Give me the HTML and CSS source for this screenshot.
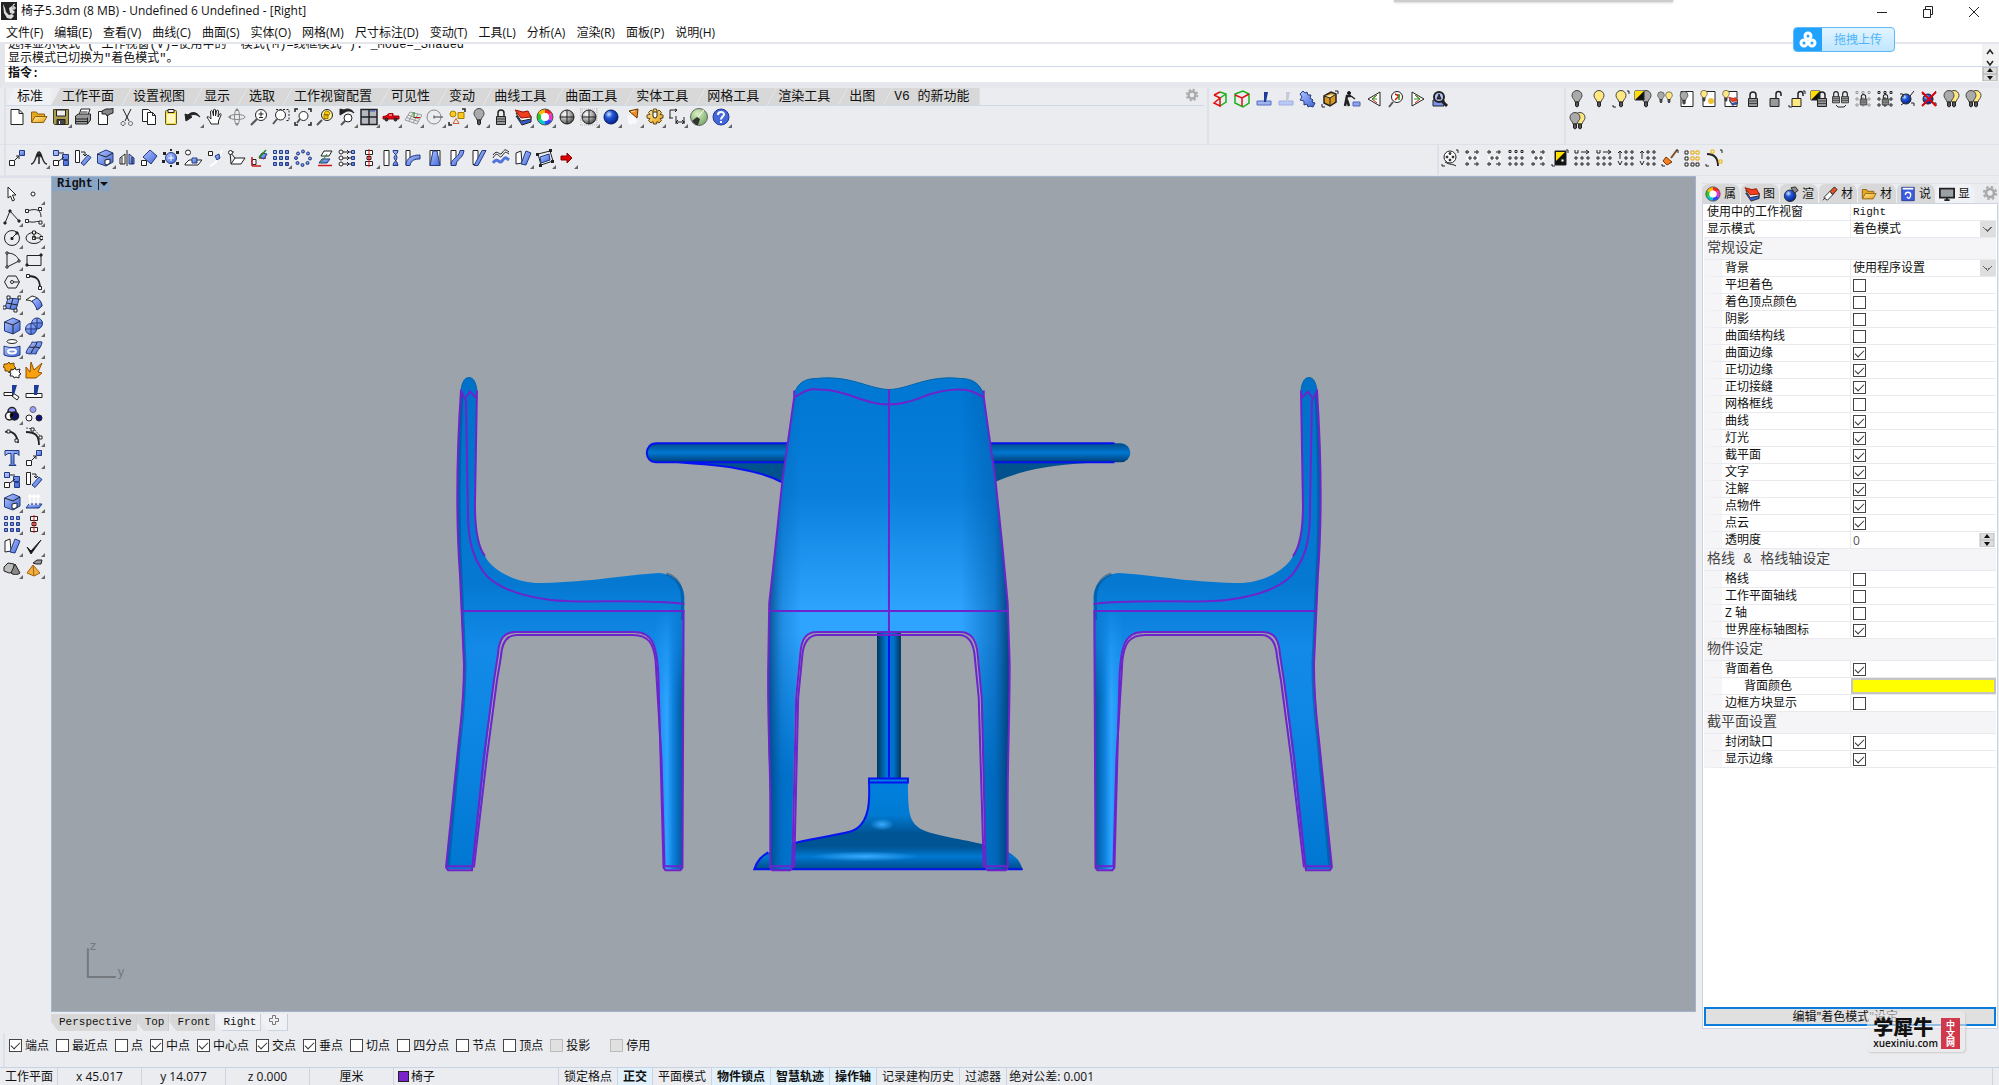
FILE: index.html
```html
<!DOCTYPE html>
<html lang="zh-CN">
<head>
<meta charset="utf-8">
<title>椅子5.3dm (8 MB) - Undefined 6 Undefined - [Right]</title>
<link rel="stylesheet" href="styles.css">
</head>
<body>
<svg class="sprite" aria-hidden="true">
<defs>
<linearGradient id="gb" x1="0" y1="0" x2="1" y2="1"><stop offset="0" stop-color="#b4c6ff"/><stop offset="1" stop-color="#3f66d8"/></linearGradient>
<radialGradient id="ggr" cx=".35" cy=".3" r=".8"><stop offset="0" stop-color="#fff"/><stop offset=".5" stop-color="#aaa"/><stop offset="1" stop-color="#333"/></radialGradient>
<radialGradient id="gbl" cx=".35" cy=".3" r=".8"><stop offset="0" stop-color="#cfe2ff"/><stop offset=".35" stop-color="#1f56d8"/><stop offset="1" stop-color="#001a78"/></radialGradient>
<radialGradient id="ggn" cx=".4" cy=".3" r=".8"><stop offset="0" stop-color="#d8f0c0"/><stop offset="1" stop-color="#6fa060"/></radialGradient>
<linearGradient id="gy" x1="0" y1="0" x2="1" y2="1"><stop offset="0" stop-color="#ffef9c"/><stop offset="1" stop-color="#e89a10"/></linearGradient>
</defs>
<symbol id="new" viewBox="0 0 18 18"><path class="w" d="M3 1.500h8l4 4v11H3zM11 1.500v4h4"/></symbol>
<symbol id="open" viewBox="0 0 18 18"><path fill="#e8a820" stroke="#8a6010" d="M1.500 14V4h5l1 2h7v3"/><path fill="url(#gy)" stroke="#8a6010" d="M1.500 14.500L5 8.500h12l-3.500 6z"/></symbol>
<symbol id="save" viewBox="0 0 18 18"><path fill="#a89a50" stroke="#444020" d="M1.500 1.500h15v15h-14l-1-1z"/><path fill="#eee" d="M4.500 2h9v6h-9z"/><path fill="#444" d="M5 11.500h8v5H5z"/><path stroke="#fff" d="M7.500 13v3"/></symbol>
<symbol id="print" viewBox="0 0 18 18"><path class="w" d="M5 7l2-6h9l-2 6M6.500 4h7"/><path fill="#999" d="M1.500 8l3-2h12v6l-3 4h-12z"/><path class="w" d="M2 11h11M2 13.500h11M13.500 16V9.500"/></symbol>
<symbol id="prop" viewBox="0 0 18 18"><path class="w" d="M2.500 3.500h9v13h-9z"/><path fill="#888" d="M6 3l4-2h5l2-1v5l-3 1-3 2-1-2-4 0z"/></symbol>
<symbol id="cut" viewBox="0 0 18 18"><path d="M5 1l6 12M13 1L7 13"/><path stroke="#555" d="M5 13.500a2 2 0 1 0 .1 0M12.500 13.500a2 2 0 1 0 .1 0"/></symbol>
<symbol id="copy" viewBox="0 0 18 18"><path class="w" d="M2.500 1.500h6l3 3v9h-9z"/><path class="w" d="M7.500 4.500h5l3 3v9h-8zM12.500 4.500v3h3"/></symbol>
<symbol id="paste" viewBox="0 0 18 18"><rect x="3.500" y="2.500" width="11" height="14" rx="1" fill="#f5dc50" stroke="#665510"/><path fill="#eee" d="M6 1.500h6v3H6z"/><path fill="#fff7c0" stroke="none" d="M5 6h8v9H5z"/></symbol>
<symbol id="undo" viewBox="0 0 18 18"><path fill="#222" d="M1 6l1 7 6-4-2-1c4-3 7-1 10 1C13 4 8 3 4 7z"/></symbol>
<symbol id="pan" viewBox="0 0 18 18"><path class="w" d="M5 16c-1-3-4-6-4-7 1-1 2 0 4 2L4.500 3.500c0-1 2-1 2 0L7.500 8V2c0-1 2-1 2 0v6l1-5c0-1 2-1 2 0l-.5 6 1.500-3c1-1 2 0 1.500 1l-2.500 6v3z"/></symbol>
<symbol id="rotv" viewBox="0 0 18 18"><g stroke="#888"><ellipse cx="9" cy="9" rx="8" ry="2.500"/><ellipse cx="9" cy="9" rx="2.500" ry="8"/></g><path fill="#888" stroke="none" d="M9 0l2 3H7zM9 18l2-3H7zM0 9l3-2v4z"/></symbol>
<symbol id="zdyn" viewBox="0 0 18 18"><path stroke-width="2" stroke="#555" d="M7 11l-6 6"/><circle class="w" cx="11" cy="7" r="5.500"/><path d="M8.500 6h5M11 3.500v5M9 9.500h4"/></symbol>
<symbol id="zwin" viewBox="0 0 18 18"><path stroke-width="2" stroke="#555" d="M5 11l-4 5"/><circle class="w" cx="8.500" cy="7" r="5"/><path stroke-dasharray="2 1.500" d="M4 1.500h13v11h-4"/></symbol>
<symbol id="zext" viewBox="0 0 18 18"><path stroke-width="2" stroke="#555" d="M6 11l-3 4"/><circle class="w" cx="9.500" cy="8" r="4.500"/><path stroke-width="1.500" d="M1 4V1h3M14 1h3v3M17 14v3h-3M1 14v3h3"/></symbol>
<symbol id="zsel" viewBox="0 0 18 18"><path stroke-width="2" stroke="#555" d="M6 12l-5 5"/><circle cx="11" cy="7" r="5.500" fill="#fff6a0"/><path fill="#ffc800" stroke="#997000" d="M11 3a2.500 2.500 0 1 0 .1 0zM8 6.500h4v4H8z"/></symbol>
<symbol id="zund" viewBox="0 0 18 18"><path fill="#222" d="M2 1v6l5-3c4-2 6-1 9 1-2-4-7-5-10-3z"/><path stroke-width="2" stroke="#555" d="M7 13l-4 4"/><circle class="w" cx="10" cy="10" r="4"/></symbol>
<symbol id="four" viewBox="0 0 18 18"><path fill="#b4b8c0" stroke-width="1.500" d="M1 1.500h16v15H1zM9 1.500v15M1 9h16"/><path stroke="#3355cc" d="M10 3h5"/></symbol>
<symbol id="car" viewBox="0 0 18 18"><path fill="#e00010" stroke="#a00008" d="M1 11V8.500l3-.5 3-2.500h4V8h6v3z"/><path stroke="#eee" d="M7 7h3"/><circle cx="4.500" cy="11.500" r="1.500" fill="#333"/><circle cx="13.500" cy="11.500" r="1.500" fill="#333"/></symbol>
<symbol id="cpl" viewBox="0 0 18 18"><path stroke="#999" d="M1 12l5-8 12 3-5 9zM4 7l11 4M9 5l-4 8M14 6l-5 9M2.500 9.500l12 4"/><path stroke="#c00" d="M10 9.500h6"/><path stroke="#080" d="M10 10V4"/></symbol>
<symbol id="osn" viewBox="0 0 18 18"><circle cx="8" cy="9" r="7" stroke="#888"/><path stroke="#444" d="M8 9h9M8 7.500v3"/></symbol>
<symbol id="sel" viewBox="0 0 18 18"><circle cx="5" cy="6" r="3" fill="#ffc820" stroke="#a08000"/><path fill="#ffc820" stroke="#a08000" d="M10 4.500h6v6h-6z"/><path stroke="#d06030" d="M8 10.500l-3 5h6z"/><path d="M14 1h3v3M1 14v3h3" stroke-width="1.500"/></symbol>
<symbol id="bulb" viewBox="0 0 18 18"><path class="bf" d="M7 12C6.500 9 4 8.500 4 5.500a5 5 0 0 1 10 0C14 8.500 11.500 9 11 12z"/><path fill="#555" d="M7.500 12h3v4l-1.500 1-1.500-1z"/></symbol>
<symbol id="lock" viewBox="0 0 18 18"><path stroke-width="1.500" d="M6 9V5a3 3 0 0 1 6 0v4"/><path class="lf" d="M4.500 8.500h9v8h-9z"/><path stroke="#444" d="M5 11h8M5 13.500h8"/></symbol>
<symbol id="unlock" viewBox="0 0 18 18"><path stroke-width="1.500" d="M10 9V4a2.500 2.500 0 0 1 5 0v2"/><path class="lf" d="M4 8.500h9v8H4z"/></symbol>
<symbol id="layers" viewBox="0 0 18 18"><path fill="#335bd0" d="M2 8l6 9 9-3V9z"/><path class="w" d="M2 5l5 8 10-2V8z"/><path fill="#f04020" stroke="#901000" d="M1 2l6 8 10-1-3-6-5 1z"/></symbol>
<symbol id="wheel" viewBox="0 0 18 18"><g stroke-width="4"><path stroke="#f22" d="M9 3a6 6 0 0 1 5.200 3"/><path stroke="#e3c" d="M14.200 6a6 6 0 0 1 0 6"/><path stroke="#34f" d="M14.200 12A6 6 0 0 1 9 15"/><path stroke="#0cc" d="M9 15a6 6 0 0 1-5.200-3"/><path stroke="#2c2" d="M3.800 12a6 6 0 0 1 0-6"/><path stroke="#fb0" d="M3.800 6A6 6 0 0 1 9 3"/></g><circle cx="9" cy="9" r="8" stroke="#555"/><circle cx="9" cy="9" r="4" fill="#fff" stroke="none"/></symbol>
<symbol id="sph" viewBox="0 0 18 18"><circle cx="9" cy="9" r="7" fill="url(#ggr)"/><path d="M2 9h14M9 2v14"/></symbol>
<symbol id="sphg" viewBox="0 0 18 18"><path stroke="#bbb" stroke-dasharray="1 1" d="M0 1h18M0 4h18M0 8h18M0 12h18M0 17h18M1 0v18M17 0v18"/><circle cx="9" cy="9" r="7" fill="url(#ggr)"/><path d="M2 9h14M9 2v14"/></symbol>
<symbol id="sphb" viewBox="0 0 18 18"><circle cx="9" cy="9" r="7" fill="url(#gbl)" stroke="#001a60"/></symbol>
<symbol id="cone" viewBox="0 0 18 18"><path fill="#fff" stroke="none" opacity=".7" d="M3 8l8-3 2 10-8 2z"/><path fill="#f09020" stroke="#663000" d="M5 3l9-2-1 9z"/><path stroke="#ffe0a0" d="M7 4l4-1"/></symbol>
<symbol id="gear" viewBox="0 0 18 18"><path fill="url(#gy)" stroke="#5a4410" d="M7.500 1h3l.5 2.500 2-1.500 2.500 2.500-1.500 2 3 .5v3l-3 .5 1.500 2-2.500 2.500-2-1.500-.5 2.500h-3L7 13.500 5 15l-2.500-2.500 1.500-2-3-.5V7l3-.5-1.500-2L5 2l2 1.500z"/><path class="w" d="M7 4h4v4a2 2 0 0 1-4 0z"/></symbol>
<symbol id="dims" viewBox="0 0 18 18"><path d="M2 2h7M2 2v8M1 10h4M8 8v8M8 14h9M16 9v7M7 1l2 1-2 2M10 12l-2 2 2 2M14 12l2 2-2 2"/></symbol>
<symbol id="globe" viewBox="0 0 18 18"><circle cx="9" cy="9" r="8.500" fill="url(#ggn)" stroke="#666"/><path fill="#333" stroke="none" d="M2 13l5-4 3 2-2 6H6z"/><path stroke="#fff" d="M8 9l6-7"/></symbol>
<symbol id="help" viewBox="0 0 18 18"><circle cx="9" cy="9" r="8" fill="#4468d8" stroke="#223a90"/><path stroke="#fff" stroke-width="2" d="M6 7c0-4 6-4 6-.5 0 2-3 2-3 5M9 13v2"/></symbol>
<symbol id="move" viewBox="0 0 18 18"><path class="w" d="M1.500 11.500h5v5h-5z"/><path class="b" d="M11.500 1.500h5v5h-5z"/><path d="M7 11l4-4M8 7h3v3"/></symbol>
<symbol id="acur" viewBox="0 0 18 18"><path stroke-width="1.500" d="M1 15c5 0 5-12 8-12s3 12 8 12M9 15V5M6.500 8L9 5l2.500 3"/></symbol>
<symbol id="dup" viewBox="0 0 18 18"><path class="b" d="M1.500 1.500h5v5h-5zM11.500 11.500h5v5h-5zM10.500 5.500h6v5h-6z"/><path class="w" d="M1.500 11.500h5v5h-5z"/><path d="M7 4h5M7 12l5-4"/></symbol>
<symbol id="rot" viewBox="0 0 18 18"><path class="w" d="M1.500 1.500h4v12h-4z"/><path class="b" d="M7 14l7-8 3 2.500-7 8z"/><path d="M7 3h4v3M9 5l2 2 2-2"/></symbol>
<symbol id="box" viewBox="0 0 18 18"><path class="b" d="M1.500 5L10 1l7 3v9l-7 4-8.500-3z"/><path d="M1.500 5L10 8l7-4M10 8v9"/></symbol>
<symbol id="boxc" viewBox="0 0 18 18"><path class="b" d="M1.500 5L10 1l7 3v9l-7 4-8.500-3z"/><path d="M1.500 5L10 8l7-4"/><path class="w" d="M9 11l5-1v4l-3 2-2-1z"/></symbol>
<symbol id="mir" viewBox="0 0 18 18"><path class="w" d="M2 15V9l5-4v10z"/><path class="b" d="M16 15V9l-5-4v10z"/><path d="M9 1v16M4 8v7M14 8v7"/></symbol>
<symbol id="dia" viewBox="0 0 18 18"><path class="b" d="M3 8l7-7 7 6-6 8z"/><path class="w" d="M1.500 11.500h5v5h-5z"/></symbol>
<symbol id="ori" viewBox="0 0 18 18"><circle class="b" cx="9" cy="9" r="5.500"/><path stroke="#fff" d="M6 9h6M9 6v6"/><path fill="#222" stroke="none" d="M1 3h3v3H1zM14 2h3v3h-3zM0 11h3v3H0zM14 13h3v3h-3zM8 0h2v2H8zM8 16h2v2H8z"/></symbol>
<symbol id="onsrf" viewBox="0 0 18 18"><path class="w" d="M1 15l4-4h13l-4 5H1z"/><path class="b" d="M8 9h5v5H8z"/><circle class="w" cx="4" cy="3.500" r="2.500"/></symbol>
<symbol id="flow" viewBox="0 0 18 18"><path stroke="#fff" stroke-width="2" d="M4 17c7-3 10-8 12-16"/><path class="w" d="M2.500 2.500h4v4h-4z"/><path class="b" d="M9 7l4-2 1 4-3 2z"/></symbol>
<symbol id="pers" viewBox="0 0 18 18"><path class="w" d="M3 15l4-6h10l-4 6z"/><path d="M3 15L2 3l5 6M2 3h4"/><circle class="w" cx="2.500" cy="3.500" r="2"/></symbol>
<symbol id="axis" viewBox="0 0 18 18"><path class="w" d="M2 10.500h4v5H2z"/><path stroke="#d01818" stroke-width="1.500" d="M2 17h9M2 17V8M9 9h7"/><path class="b" d="M9 8l3-4 5 1-3 5z"/><path stroke="#189018" stroke-width="1.500" d="M9 9l7-8"/></symbol>
<symbol id="g9" viewBox="0 0 18 18"><path class="b" d="M1.500 1.500h3v3h-3zM7.500 1.500h3v3h-3zM13.500 1.500h3v3h-3zM1.500 7.500h3v3h-3zM7.500 7.500h3v3h-3zM13.500 7.500h3v3h-3zM1.500 13.500h3v3h-3zM7.500 13.500h3v3h-3zM13.500 13.500h3v3h-3z"/></symbol>
<symbol id="pol" viewBox="0 0 18 18"><g class="b"><circle cx="9" cy="2.500" r="1.500"/><circle cx="14" cy="4.500" r="1.500"/><circle cx="16" cy="9.500" r="1.500"/><circle cx="13.500" cy="14" r="1.500"/><circle cx="8.500" cy="16" r="1.500"/><circle cx="3.500" cy="14" r="1.500"/><circle cx="2" cy="9" r="1.500"/><circle cx="4" cy="4.500" r="1.500"/></g></symbol>
<symbol id="psh" viewBox="0 0 18 18"><path class="w" d="M5 7l3-5h8l-3 5z"/><path class="b" d="M3 14l3-4h8l-3 4z"/><path stroke="#189018" d="M5 14l6-9"/><path stroke="#d01818" stroke-width="1.500" d="M2 16.500h14"/></symbol>
<symbol id="list" viewBox="0 0 18 18"><path d="M5 3h8M5 9h8M5 15h8M9 1l2 2-2 2M9 7l2 2-2 2M9 13l2 2-2 2"/><g class="w"><circle cx="3" cy="3" r="2"/><circle cx="3" cy="9" r="2"/><circle cx="3" cy="15" r="2"/></g><path class="b" d="M13.500 1.500h3v3h-3zM13.500 7.500h3v3h-3zM13.500 13.500h3v3h-3z"/></symbol>
<symbol id="alg" viewBox="0 0 18 18"><path class="w" d="M5.500 1.500h7v4h-7zM7 7.500h4v3H7zM5.500 12.500h7v4h-7z"/><path stroke="#e01010" d="M9 0v18M7 9h4"/></symbol>
<symbol id="tws" viewBox="0 0 18 18"><path class="w" d="M2 1.500h5v15H2z"/><path class="b" d="M11 1.500h5c0 4-4 4-4 7s4 4 4 8h-5c0-4 4-4 4-8s-4-3-4-7z"/></symbol>
<symbol id="bnd" viewBox="0 0 18 18"><path class="w" d="M2 16V1.500h4V13"/><path class="b" d="M2 16.500C2 9 8 6 16 6v4c-5 0-9 1-10 6.500z"/></symbol>
<symbol id="tap" viewBox="0 0 18 18"><path class="w" d="M4 1.500h10v15H4z"/><path class="b" d="M7 2h4l3 14.500H4z"/></symbol>
<symbol id="sh1" viewBox="0 0 18 18"><path class="w" d="M3 1.500h5v14H3z"/><path class="b" d="M3 16.500c0-8 8-7 9-15h4c-1 9-8 8-8 15z"/></symbol>
<symbol id="sh2" viewBox="0 0 18 18"><path class="w" d="M3 1.500h5v14H3z"/><path class="b" d="M4 16.500l8-15h4l-8 15z"/></symbol>
<symbol id="wav" viewBox="0 0 18 18"><path d="M1 9c5-9 6 2 9-2s3-5 7-2M1 6c5-7 6 2 9-2s3-4 7-1"/><path stroke="#5074d8" stroke-width="3" d="M1 14c5-7 6 2 9-2s3-4 7-1"/></symbol>
<symbol id="cg1" viewBox="0 0 18 18"><path class="w" d="M2 4l5-2 1 12-6 1z"/><path class="b" d="M7 15l5-13 5 2-5 12z"/></symbol>
<symbol id="cg2" viewBox="0 0 18 18"><path d="M2 5l12-3 3 10-12 4z"/><path class="b" d="M4 8l9-3 1 6-9 3z"/><path fill="#222" stroke="none" d="M0 4h3v3H0zM13 0h3v3h-3zM15 11h3v3h-3zM3 15h3v3H3z"/></symbol>
<symbol id="red" viewBox="0 0 18 18"><path fill="#e00000" stroke="#800" d="M3 7h6V4l5 5-5 5v-3H3z"/></symbol>
<symbol id="arr" viewBox="0 0 18 18"><path class="w" d="M5 2l8 8H9.500l2 5-2 1-2-5L5 13z"/></symbol>
<symbol id="pt" viewBox="0 0 18 18"><circle class="w" cx="8" cy="9" r="2"/></symbol>
<symbol id="pl" viewBox="0 0 18 18"><path d="M2 16L7 4l9 10"/><path fill="#222" d="M1 15h2v2H1zM6 3h2v2H6zM15 13h2v2h-2z"/></symbol>
<symbol id="crv" viewBox="0 0 18 18"><path d="M2 4c12-4 14 1 14 6M2 14c8 3 9-1 14 1"/><path class="w" d="M.500 2.500h3v3h-3zM13.500.500h3v3h-3zM.500 12.500h3v3h-3zM14 14h3v3h-3z"/></symbol>
<symbol id="cir" viewBox="0 0 18 18"><circle cx="9" cy="9" r="7.500"/><path fill="#222" d="M9 9l5-5M8 8.500h2v2H8zM13 3h2v2h-2z"/></symbol>
<symbol id="ell" viewBox="0 0 18 18"><ellipse cx="9" cy="9" rx="8" ry="5.500"/><path class="w" d="M7.500 7.500h3v3h-3zM15 7.500h3v3h-3zM7.500 2h3v3h-3z"/><path d="M9 5v4h6"/></symbol>
<symbol id="arc" viewBox="0 0 18 18"><path d="M4 16V2c6 0 11 3 12 8L4 16"/><path class="w" d="M3 1h2v2H3zM15 9h2v2h-2zM3 15h2v2H3z"/></symbol>
<symbol id="rec" viewBox="0 0 18 18"><path d="M2 4.500h14v10H2z"/><path fill="#222" d="M15 3h2v2h-2zM1 13h2v2H1z"/></symbol>
<symbol id="hex" viewBox="0 0 18 18"><path d="M1.500 9L5 3h8l3.500 6-3.500 6H5zM9 9h7"/><circle class="w" cx="9" cy="9" r="1.500"/></symbol>
<symbol id="fil" viewBox="0 0 18 18"><path stroke-width="1.800" d="M3 3c9 0 12 4 12 12"/><path class="w" d="M1.500 1.500h3v3h-3zM13.500 13.500h3v3h-3z"/></symbol>
<symbol id="srf" viewBox="0 0 18 18"><path class="b" d="M5 3l11 1-3 11-11-2z"/><path d="M3.500 8l11 2M10 3.500L7 14"/><path class="w" d="M4 1h3v3H4zM15 1h3v3h-3zM0 11h3v3H0zM11 14h3v3h-3z"/></symbol>
<symbol id="srf2" viewBox="0 0 18 18"><path class="w" d="M1 5l6-4c6 1 9 5 10 10l-5 4c0-6-5-10-11-10z"/><path class="b" d="M7 6l5-3c3 2 5 5 5 8l-5 4c-1-4-3-6-5-9z"/></symbol>
<symbol id="sph2" viewBox="0 0 18 18"><circle class="b" cx="12" cy="6.500" r="5.500"/><path stroke="#223a80" d="M12 1v11M7 6h11"/><circle class="b" cx="6" cy="12" r="5.500"/><path stroke="#223a80" d="M6 6v11M1 12h11"/></symbol>
<symbol id="cyl" viewBox="0 0 18 18"><ellipse class="w" cx="9" cy="2.500" rx="5" ry="2"/><path class="b" d="M1 7c5 2 11 2 16 0v9c-5 2-11 2-16 0z"/><ellipse cx="9" cy="12.500" rx="4" ry="2" stroke="#fff" stroke-width="2"/></symbol>
<symbol id="msh" viewBox="0 0 18 18"><path class="b" d="M1 14c2-7 5-7 6-11 4 1 6-1 10 0-1 7-4 6-6 12-4-1-6 1-10-1z"/><path d="M4 8c4 1 7-1 11 1M12 3c-1 5-4 6-6 11"/></symbol>
<symbol id="puz" viewBox="0 0 18 18"><path fill="#f0a010" stroke="#704800" d="M1 3l3 0 2-2 1 2 4-1v3l2 2-2 1 0 3-3-1-2 2-1-2-3 0 0-3-2-1 1-1z"/><path class="w" d="M8 8l2 1 2-2 1 2 4-1-1 3 2 2-2 1 0 3-3-1-2 1-1-2-3 0 1-3-2-1 2-1z"/></symbol>
<symbol id="exp" viewBox="0 0 18 18"><path fill="#f8a010" stroke="#905000" d="M1 17L1 6l4 5 1-10 3 8 8-7-4 9 4 1-6 5z"/></symbol>
<symbol id="trm" viewBox="0 0 18 18"><path class="w" d="M1 9.500h9v3H1zM10 10l6 4-2 3-5-4z"/><path fill="#1c3c98" stroke="none" d="M9 2h5l-3 10-2-2z"/></symbol>
<symbol id="spl" viewBox="0 0 18 18"><path class="w" d="M1 10.500h16v4H1z"/><path fill="#1c3c98" stroke="none" d="M9 2h5l-2 10H9z"/></symbol>
<symbol id="ven" viewBox="0 0 18 18"><circle cx="9" cy="6.500" r="4" fill="#98a0ff" stroke-width="1.500"/><circle cx="6.500" cy="11" r="4" fill="#fff" stroke-width="1.500"/><circle cx="11.500" cy="11" r="4" fill="#101070" stroke-width="1.500"/><path fill="#000" d="M9 7l2 3-2 3-2-3z"/></symbol>
<symbol id="cc3" viewBox="0 0 18 18"><circle cx="8" cy="4.500" r="3" fill="#98a0ff" stroke="#666"/><circle cx="4" cy="13" r="3" fill="#fff"/><circle cx="14" cy="13" r="3" fill="#101080"/></symbol>
<symbol id="apt" viewBox="0 0 18 18"><path stroke-width="1.800" d="M2 5c8-2 12 3 13 11"/><path class="w" d="M4 3h3v3H4zM12 12h3v3h-3z"/></symbol>
<symbol id="cpt" viewBox="0 0 18 18"><path stroke-width="1.800" d="M1 5c9 0 13 3 13 13"/><path stroke="#555" stroke-dasharray="2 1" d="M1 1l8 1 8 9"/><path class="w" d="M6 1h3v3H6zM14 9h3v3h-3z"/></symbol>
<symbol id="txt" viewBox="0 0 18 18"><path class="b" d="M2 1.500h14v5l-2-2h-3v10l2 2H6l2-2V4.500H5l-3 2z"/></symbol>
<symbol id="prj" viewBox="0 0 18 18"><path class="b" d="M1 15l3-4h13l-3 4z"/><path stroke="#fff" stroke-width="1.500" d="M5 12V2M9 12V2M13 12V2M3 4l2-2 2 2M7 4l2-2 2 2M11 4l2-2 2 2"/></symbol>
<symbol id="chk" viewBox="0 0 18 18"><path fill="#111" d="M2 10l4 4L16 3 6 17z"/></symbol>
<symbol id="sol" viewBox="0 0 18 18"><path fill="#bbb" d="M1 8l4-4 6 1v8l-5 1-5-2z"/><path fill="#888" d="M8 14l4-9 5 9c-2 2-7 2-9 0z"/></symbol>
<symbol id="pyr" viewBox="0 0 18 18"><path fill="#f0b040" stroke="#a06010" d="M2 14l6-8 7 8-6 3z"/><path stroke="#a06010" d="M8 6l1 11"/><path fill="#999" d="M8 4l4-3h5l-1 4-5 0z"/></symbol>
<symbol id="rg1" viewBox="0 0 18 18"><path stroke="#18b018" stroke-width="1.500" d="M9 2l6 2v8l-6 4M9 8l6-4"/><path stroke="#e01010" stroke-width="1.500" d="M3 5l6-3M3 5l6 3-6 5 6 3V8"/></symbol>
<symbol id="rg2" viewBox="0 0 18 18"><path stroke="#18b018" stroke-width="1.500" d="M2 4l8-3 6 3v9l-6 4-8-4z"/><path stroke="#e01010" stroke-width="1.500" d="M2 5l7 3 7-4M9 8v8"/></symbol>
<symbol id="bl1" viewBox="0 0 18 18"><path fill="#a0b4f0" stroke="#5070c0" d="M2 11h14v4H2z"/><path fill="#1c3c98" stroke="none" d="M9 2h4l-2 10H9z"/></symbol>
<symbol id="bl2" viewBox="0 0 18 18"><path fill="#b8c8f8" stroke="#a0b0e0" d="M2 11h14v4H2z"/><path fill="#c8cad8" stroke="none" d="M9 2h4l-2 10H9z"/></symbol>
<symbol id="gr2" viewBox="0 0 18 18"><path class="b" d="M4 1l2 2 2-1 1 3 3 0-1 3 3 2-1 2 3 1-2 4-3-1-2 1-1-3-3 1 0-4-4-1 2-3-2-3z"/></symbol>
<symbol id="gold" viewBox="0 0 18 18"><path fill="#d89820" stroke-width="1.500" d="M3 6l7-4 5 2v8l-6 4-6-3z"/><path fill="#ffe8a0" d="M3 6l6 2 6-4M9 8v8"/><path d="M14 1h3v3M1 14v3h3"/></symbol>
<symbol id="man" viewBox="0 0 18 18"><circle cx="6" cy="3" r="1.500" fill="#111"/><path stroke-width="2.500" d="M8 6H4L3 11l-1 5M4 10l2 6"/><path stroke-width="1.500" d="M8 6l4 3"/><path fill="#8ca4f0" stroke="#5068b0" d="M10 12h7v4h-7z"/></symbol>
<symbol id="trl" viewBox="0 0 18 18"><path class="w" d="M15 2v14L3 9z"/><path stroke="#e01010" d="M12 5L7 9l5 4"/><path stroke="#18a018" d="M12 9H7l5-4"/></symbol>
<symbol id="trr" viewBox="0 0 18 18"><path class="w" d="M3 2v14l12-7z"/><path stroke="#e01010" d="M6 5l5 4-5 4"/><path stroke="#18a018" d="M5 9h6L6 5"/></symbol>
<symbol id="mgr" viewBox="0 0 18 18"><path stroke-width="2" stroke="#555" d="M6 12l-4 5"/><circle class="w" cx="10" cy="7" r="5.500"/><path stroke="#e01010" stroke-width="1.500" d="M8 4l4 2-4 4"/><path stroke="#18a018" stroke-width="1.500" d="M12 4v6"/></symbol>
<symbol id="mgb" viewBox="0 0 18 18"><path fill="#7c94f0" d="M2 10h11v6H2z"/><path stroke-width="3" d="M11 11l5 5"/><circle cx="8" cy="7" r="5" fill="#b8c4f8" stroke-width="2"/><path fill="#333" d="M6 9l2-5 2 5z"/></symbol>
<symbol id="half" viewBox="0 0 18 18"><path fill="#111" d="M1 1h9v9H1z"/><path fill="#ffe000" stroke="none" d="M1 10V1h9z"/></symbol>
<symbol id="brk" viewBox="0 0 18 18"><path d="M15 1h2v3M1 15v2h3"/></symbol>
<symbol id="page" viewBox="0 0 18 18"><path class="w" d="M3 1.500h12v15H3z"/></symbol>
<symbol id="dots" viewBox="0 0 18 18"><path class="w" d="M2 1.500h2v2H2zM8 1.500h2v2H8zM14 1.500h2v2h-2zM2 8h2v2H2zM8 8h2v2H8zM14 8h2v2h-2zM2 14h2v2H2zM8 14h2v2H8zM14 14h2v2h-2z"/></symbol>
<symbol id="dotx" viewBox="0 0 18 18"><path class="w" d="M3 2h2v2H3zM13 2h2v2h-2zM3 14h2v2H3zM13 14h2v2h-2z"/><path stroke="#fff" stroke-width="3" d="M3 9h13"/><path class="w" d="M6 8h2v2H6zM11 8h2v2h-2z"/><path stroke-dasharray="1 1" d="M5 3h2M11 3h2M5 15h2M11 15h2"/></symbol>
<symbol id="uar" viewBox="0 0 18 18"><path d="M2 1v3h3V1M8 3h8M13 1l3 2-3 2"/><path class="w" d="M2 8h2v2H2zM8 8h2v2H8zM14 8h2v2h-2zM2 14h2v2H2zM8 14h2v2H8zM14 14h2v2h-2z"/></symbol>
<symbol id="var" viewBox="0 0 18 18"><path d="M3 10V2M1 4l2-2 2 2M1 12l2 4 2-4"/><path class="w" d="M8 2h2v2H8zM14 2h2v2h-2zM8 8h2v2H8zM14 8h2v2h-2zM8 14h2v2H8zM14 14h2v2h-2z"/></symbol>
<symbol id="reel" viewBox="0 0 18 18"><circle class="w" cx="9" cy="8" r="6"/><circle cx="9" cy="4.500" r="1" fill="#444"/><circle cx="6" cy="8" r="1" fill="#444"/><circle cx="12" cy="8" r="1" fill="#444"/><circle cx="9" cy="11" r="1" fill="#444"/><path d="M4 13c4 3 9 2 11 4"/></symbol>
<symbol id="yb" viewBox="0 0 18 18"><path fill="#111" d="M4 2h11v14H4z"/><path fill="#ffe000" stroke="none" d="M5 12V3h9z"/><path class="w" d="M10 10h3v3h-3z"/></symbol>
<symbol id="brm" viewBox="0 0 18 18"><path stroke="#805020" stroke-width="2" d="M16 1l-6 8"/><path fill="#f08020" stroke="#803000" d="M5 8l6 5-5 3-4-4z"/></symbol>
<symbol id="ydt" viewBox="0 0 18 18"><path class="w" d="M2 2h3v3H2zM2 8h3v3H2zM2 14h3v3H2zM8 14h3v3H8zM13 14h3v3h-3z"/><path fill="#fff" stroke="#e0a000" d="M8 2h3v3H8zM13 2h3v3h-3zM8 8h3v3H8zM13 8h3v3h-3z"/></symbol>
<symbol id="yar" viewBox="0 0 18 18"><path stroke-width="1.800" d="M2 5c8 0 11 4 11 12"/><path stroke="#f0b000" d="M6 1h3v3H6zM14 11h3v3h-3z"/></symbol>
<symbol id="orb" viewBox="0 0 18 18"><circle cx="8" cy="9" r="5" fill="url(#gbl)"/><path d="M2 4h3v3M3 15l3-2M12 6l4-5M13 13h3v3"/></symbol>
<symbol id="rx" viewBox="0 0 18 18"><path stroke="#e00010" stroke-width="2" d="M2 2l14 14M16 2L2 16"/></symbol>
<symbol id="note" viewBox="0 0 18 18"><path fill="#3c5ce0" stroke="#223890" d="M2 1.500h14v15H2z"/><path fill="#fff" stroke="none" d="M3 2h12v2H3z"/><path stroke="#fff" stroke-width="1.500" d="M6 10c0-4 6-4 6 0s-3 5-4 2"/></symbol>
<symbol id="mon" viewBox="0 0 18 18"><path fill="#9aa0a4" stroke-width="2" d="M1 3h16v10H1z"/><path stroke-width="2" d="M6 16h6M9 13v3"/></symbol>
<symbol id="pen" viewBox="0 0 18 18"><path fill="#e05020" d="M9 6l5-5 3 3-5 6z"/><path class="w" d="M2 13l7-7 3 4-6 6z"/><path d="M1 16l3-3"/></symbol>
<symbol id="bomb" viewBox="0 0 18 18"><circle cx="8" cy="11" r="6.500" fill="url(#gbl)"/><path fill="#888" d="M9 2l5-1 3 4-4 3z"/></symbol>
<symbol id="cog" viewBox="0 0 18 18"><circle cx="9" cy="9" r="7" stroke-width="2" stroke-dasharray="3 2.500" class="cg"/><circle cx="9" cy="9" r="4.500" stroke-width="3" class="cg"/></symbol>
</svg>

<header class="titlebar">
  <svg class="logo" viewBox="0 0 16 18"><path fill="#222" stroke="none" d="M0 0h16v18H0z"/><path fill="#ddd" stroke="none" d="M2 2l2 4 1 4 3 3 3-1 2 2-3 3-4-1-3-5zM8 6l3-2 1 4 2 2-2 2-3-1z"/><path stroke="#fff" d="M14 2l-2 1v4h2V5h-2"/></svg>
  <h1>椅子5.3dm (8 MB) - Undefined 6 Undefined - [Right]</h1>
  <div class="winbtns">
    <button aria-label="最小化"><svg viewBox="0 0 12 12"><path d="M1 6.500h10"/></svg></button>
    <button aria-label="还原"><svg viewBox="0 0 12 12"><path d="M1.500 3.500h7v8h-7zM3.500 3.500v-3h7v8h-2"/></svg></button>
    <button aria-label="关闭"><svg viewBox="0 0 12 12"><path d="M1 1l10 10M11 1L1 11"/></svg></button>
  </div>
  <div class="topshade"></div>
</header>
<nav class="menu">
  <a href="#">文件(F)</a><a href="#">编辑(E)</a><a href="#">查看(V)</a><a href="#">曲线(C)</a><a href="#">曲面(S)</a><a href="#">实体(O)</a><a href="#">网格(M)</a><a href="#">尺寸标注(D)</a><a href="#">变动(T)</a><a href="#">工具(L)</a><a href="#">分析(A)</a><a href="#">渲染(R)</a><a href="#">面板(P)</a><a href="#">说明(H)</a>
</nav>
<button class="upload"><span class="cloud"><svg viewBox="0 0 20 20"><g stroke="#fff" stroke-width="3"><circle cx="10" cy="6" r="3"/><circle cx="6" cy="13" r="3"/><circle cx="14" cy="13" r="3"/></g></svg></span><span class="uptext">拖拽上传</span></button>

<section class="command">
  <div class="history">
    <div class="lines"><p>选择显示模式 ( 工作视窗(V)=使用中的  模式(M)=线框模式 ): _Mode=_Shaded</p><p>显示模式已切换为"着色模式"。</p></div>
    <div class="scroll"><svg viewBox="0 0 16 24"><path stroke-width="1.500" d="M5 10l3-4 3 4M5 17l3 4 3-4"/></svg></div>
  </div>
  <div class="prompt">
    <label for="cmd">指令:</label><input id="cmd" type="text">
    <div class="scroll"><svg viewBox="0 0 16 14"><path fill="#ddd" stroke="#aaa" d="M1 0h14v14H1zM1 7h14"/><path fill="#111" stroke="none" d="M8 1l3 4H5zM8 13l3-4H5z"/></svg></div>
  </div>
</section>

<div class="bars">
  <div class="bar main">
    <div class="tabs">
      <button class="on">标准</button><button>工作平面</button><button>设置视图</button><button>显示</button><button>选取</button><button>工作视窗配置</button><button>可见性</button><button>变动</button><button>曲线工具</button><button>曲面工具</button><button>实体工具</button><button>网格工具</button><button>渲染工具</button><button>出图</button><button>V6 的新功能</button>
      <svg class="ico gearopt"><use href="#cog"/></svg>
    </div>
    <div class="icons">
      <button aria-label="新建"><svg class="ico"><use href="#new"/></svg></button><button aria-label="打开"><svg class="ico"><use href="#open"/></svg></button><button class="m" aria-label="保存"><svg class="ico"><use href="#save"/></svg></button><button aria-label="打印"><svg class="ico"><use href="#print"/></svg></button><button aria-label="属性"><svg class="ico"><use href="#prop"/></svg></button><button aria-label="剪切"><svg class="ico"><use href="#cut"/></svg></button><button aria-label="复制"><svg class="ico"><use href="#copy"/></svg></button><button aria-label="粘贴"><svg class="ico"><use href="#paste"/></svg></button><button class="m" aria-label="复原"><svg class="ico"><use href="#undo"/></svg></button><button aria-label="平移"><svg class="ico"><use href="#pan"/></svg></button><button aria-label="旋转视图"><svg class="ico"><use href="#rotv"/></svg></button><button aria-label="动态缩放"><svg class="ico"><use href="#zdyn"/></svg></button><button aria-label="框选缩放"><svg class="ico"><use href="#zwin"/></svg></button><button aria-label="缩放至最大"><svg class="ico"><use href="#zext"/></svg></button><button aria-label="缩放至选取"><svg class="ico"><use href="#zsel"/></svg></button><button class="m" aria-label="复原视图"><svg class="ico"><use href="#zund"/></svg></button><button class="m" aria-label="四视图"><svg class="ico"><use href="#four"/></svg></button><button class="m" aria-label="视图"><svg class="ico"><use href="#car"/></svg></button><button class="m" aria-label="工作平面"><svg class="ico"><use href="#cpl"/></svg></button><button class="m" aria-label="锁点"><svg class="ico"><use href="#osn"/></svg></button><button class="m" aria-label="选取"><svg class="ico"><use href="#sel"/></svg></button><button class="m" aria-label="隐藏"><svg class="ico"><use href="#bulb"/></svg></button><button class="m" aria-label="锁定"><svg class="ico"><use href="#lock"/></svg></button><button class="m" aria-label="图层"><svg class="ico"><use href="#layers"/></svg></button><button class="m" aria-label="颜色"><svg class="ico"><use href="#wheel"/></svg></button><button aria-label="着色"><svg class="ico"><use href="#sph"/></svg></button><button class="m" aria-label="网格着色"><svg class="ico"><use href="#sphg"/></svg></button><button class="m" aria-label="渲染"><svg class="ico"><use href="#sphb"/></svg></button><button class="m" aria-label="灯光"><svg class="ico"><use href="#cone"/></svg></button><button class="m" aria-label="选项"><svg class="ico"><use href="#gear"/></svg></button><button class="m" aria-label="尺寸"><svg class="ico"><use href="#dims"/></svg></button><button aria-label="Grasshopper"><svg class="ico"><use href="#globe"/></svg></button><button class="m" aria-label="帮助"><svg class="ico"><use href="#help"/></svg></button>
    </div>
  </div>
  <div class="bar icons side">
    <button aria-label="边缘"><svg class="ico"><use href="#rg1"/></svg></button><button aria-label="方块"><svg class="ico"><use href="#rg2"/></svg></button><button aria-label="切割"><svg class="ico"><use href="#bl1"/></svg></button><button aria-label="切割预览"><svg class="ico"><use href="#bl2"/></svg></button><button aria-label="组件"><svg class="ico"><use href="#gr2"/></svg></button><button aria-label="图块"><svg class="ico"><use href="#gold"/></svg></button><button aria-label="推移"><svg class="ico"><use href="#man"/></svg></button><button aria-label="上一个"><svg class="ico"><use href="#trl"/></svg></button><button aria-label="检视"><svg class="ico"><use href="#mgr"/></svg></button><button aria-label="下一个"><svg class="ico"><use href="#trr"/></svg></button><button aria-label="搜索"><svg class="ico"><use href="#mgb"/></svg></button>
  </div>
  <div class="bar icons side">
    <button aria-label="隐藏物件"><svg class="ico"><use href="#bulb"/></svg></button><button class="yel" aria-label="显示物件"><svg class="ico"><use href="#bulb"/></svg></button><button class="yel" aria-label="显示选取"><svg class="ico"><use href="#bulb"/><use href="#brk"/></svg></button><button aria-label="反选隐藏"><svg class="ico"><use href="#bulb" x="3"/><use href="#half"/></svg></button><button class="yel2" aria-label="对调隐藏"><svg class="ico"><use href="#bulb" x="7" y="0" width="12" height="15"/><use href="#bulb" x="-1" y="0" width="12" height="15"/></svg></button><button aria-label="图纸隐藏"><svg class="ico"><use href="#page"/><use href="#bulb" x="-1" y="1" width="14" height="14"/></svg></button><button class="yel" aria-label="图纸显示"><svg class="ico"><use href="#page"/><use href="#bulb" x="-2" y="0" width="12" height="12"/><circle cx="11" cy="11" r="3" fill="#f0c030" stroke="none"/></svg></button><button class="yel" aria-label="图纸图层"><svg class="ico"><use href="#page"/><use href="#layers" x="6" y="6" width="10" height="10"/><use href="#bulb" x="-2" y="0" width="12" height="12"/></svg></button><button aria-label="锁定物件"><svg class="ico"><use href="#lock"/></svg></button><button aria-label="解锁物件"><svg class="ico"><use href="#unlock"/></svg></button><button class="yel" aria-label="解锁选取"><svg class="ico"><use href="#unlock"/><use href="#brk"/></svg></button><button aria-label="反选锁定"><svg class="ico"><use href="#half"/><use href="#lock" x="3"/></svg></button><button aria-label="对调锁定"><svg class="ico"><use href="#lock" x="-3" y="0" width="14" height="14"/><use href="#lock" x="6" y="0" width="14" height="14"/><path d="M4 15l2 2h6l2-2"/></svg></button><button aria-label="锁定点"><svg class="ico dim"><use href="#dots"/><use href="#lock" x="3" y="3" width="13" height="13"/></svg></button><button aria-label="解锁点"><svg class="ico"><use href="#dots"/><use href="#lock" x="3" y="3" width="13" height="13"/></svg></button><button aria-label="隔离"><svg class="ico"><use href="#orb"/></svg></button><button aria-label="取消隔离"><svg class="ico"><use href="#orb"/><use href="#rx"/></svg></button><button class="yel2" aria-label="隐藏一"><svg class="ico"><use href="#bulb" x="3"/><use href="#bulb" x="-2"/></svg></button><button class="yel2" aria-label="隐藏二"><svg class="ico"><use href="#bulb" x="3"/><use href="#bulb" x="-2"/></svg></button><button class="yel2" aria-label="隐藏三"><svg class="ico"><use href="#bulb" x="3"/><use href="#bulb" x="-2"/></svg></button>
  </div>
</div>
<div class="bars second">
  <div class="bar icons">
    <button aria-label="移动"><svg class="ico"><use href="#move"/></svg></button><button class="m" aria-label="曲线"><svg class="ico"><use href="#acur"/></svg></button><button aria-label="复制物件"><svg class="ico"><use href="#dup"/></svg></button><button aria-label="旋转"><svg class="ico"><use href="#rot"/></svg></button><button class="m" aria-label="缩放"><svg class="ico"><use href="#boxc"/></svg></button><button aria-label="镜像"><svg class="ico"><use href="#mir"/></svg></button><button aria-label="定位"><svg class="ico"><use href="#dia"/></svg></button><button aria-label="曲面定位"><svg class="ico"><use href="#ori"/></svg></button><button aria-label="投影"><svg class="ico"><use href="#onsrf"/></svg></button><button aria-label="沿曲线"><svg class="ico"><use href="#flow"/></svg></button><button aria-label="垂直定位"><svg class="ico"><use href="#pers"/></svg></button><button aria-label="重新对应"><svg class="ico"><use href="#axis"/></svg></button><button class="m" aria-label="阵列"><svg class="ico"><use href="#g9"/></svg></button><button aria-label="环形阵列"><svg class="ico"><use href="#pol"/></svg></button><button aria-label="投影至平面"><svg class="ico"><use href="#psh"/></svg></button><button aria-label="设置点"><svg class="ico"><use href="#list"/></svg></button><button class="m" aria-label="对齐"><svg class="ico"><use href="#alg"/></svg></button><button aria-label="扭转"><svg class="ico"><use href="#tws"/></svg></button><button aria-label="弯曲"><svg class="ico"><use href="#bnd"/></svg></button><button aria-label="锥状化"><svg class="ico"><use href="#tap"/></svg></button><button aria-label="倾斜"><svg class="ico"><use href="#sh1"/></svg></button><button aria-label="直线倾斜"><svg class="ico"><use href="#sh2"/></svg></button><button aria-label="流动"><svg class="ico"><use href="#wav"/></svg></button><button class="m" aria-label="变形"><svg class="ico"><use href="#cg1"/></svg></button><button class="m" aria-label="变形控制器"><svg class="ico"><use href="#cg2"/></svg></button><button class="m" aria-label="推移"><svg class="ico"><use href="#red"/></svg></button>
  </div>
  <div class="bar icons">
    <button aria-label="点选"><svg class="ico"><use href="#reel"/><use href="#brk"/></svg></button><button aria-label="点一"><svg class="ico"><use href="#dotx"/></svg></button><button aria-label="点二"><svg class="ico"><use href="#dotx"/></svg></button><button aria-label="点三"><svg class="ico"><use href="#dots"/></svg></button><button aria-label="点四"><svg class="ico"><use href="#dotx"/></svg></button><button aria-label="反选点"><svg class="ico"><use href="#yb"/><use href="#brk"/></svg></button><button aria-label="U 方向"><svg class="ico"><use href="#uar"/></svg></button><button aria-label="U 方向二"><svg class="ico"><use href="#uar"/></svg></button><button aria-label="V 方向"><svg class="ico"><use href="#var"/></svg></button><button aria-label="V 方向二"><svg class="ico"><use href="#var"/></svg></button><button aria-label="笔刷"><svg class="ico"><use href="#brm"/><use href="#brk"/></svg></button><button aria-label="控制点"><svg class="ico"><use href="#ydt"/></svg></button><button aria-label="曲线点"><svg class="ico"><use href="#yar"/><use href="#brk"/></svg></button>
  </div>
</div>

<main class="work">
  <aside class="icons tools">
    <button aria-label="选取"><svg class="ico"><use href="#arr"/></svg></button><button class="m" aria-label="点"><svg class="ico"><use href="#pt"/></svg></button>
    <button class="m" aria-label="多重直线"><svg class="ico"><use href="#pl"/></svg></button><button class="m" aria-label="曲线"><svg class="ico"><use href="#crv"/></svg></button>
    <button class="m" aria-label="圆"><svg class="ico"><use href="#cir"/></svg></button><button class="m" aria-label="椭圆"><svg class="ico"><use href="#ell"/></svg></button>
    <button class="m" aria-label="圆弧"><svg class="ico"><use href="#arc"/></svg></button><button class="m" aria-label="矩形"><svg class="ico"><use href="#rec"/></svg></button>
    <button class="m" aria-label="多边形"><svg class="ico"><use href="#hex"/></svg></button><button class="m" aria-label="圆角"><svg class="ico"><use href="#fil"/></svg></button>
    <button class="m" aria-label="角点曲面"><svg class="ico"><use href="#srf"/></svg></button><button class="m" aria-label="曲面"><svg class="ico"><use href="#srf2"/></svg></button>
    <button class="m" aria-label="立方体"><svg class="ico"><use href="#box"/></svg></button><button class="m" aria-label="布尔"><svg class="ico"><use href="#sph2"/></svg></button>
    <button class="m" aria-label="圆柱"><svg class="ico"><use href="#cyl"/></svg></button><button class="m" aria-label="网格"><svg class="ico"><use href="#msh"/></svg></button>
    <button aria-label="组合"><svg class="ico"><use href="#puz"/></svg></button><button aria-label="炸开"><svg class="ico"><use href="#exp"/></svg></button>
    <button aria-label="修剪"><svg class="ico"><use href="#trm"/></svg></button><button aria-label="分割"><svg class="ico"><use href="#spl"/></svg></button>
    <button class="m" aria-label="群组"><svg class="ico"><use href="#ven"/></svg></button><button aria-label="解散群组"><svg class="ico"><use href="#cc3"/></svg></button>
    <button aria-label="编辑点"><svg class="ico"><use href="#apt"/></svg></button><button class="m" aria-label="控制点"><svg class="ico"><use href="#cpt"/></svg></button>
    <button aria-label="文字"><svg class="ico"><use href="#txt"/></svg></button><button class="m" aria-label="移动"><svg class="ico"><use href="#move"/></svg></button>
    <button aria-label="复制"><svg class="ico"><use href="#dup"/></svg></button><button aria-label="旋转"><svg class="ico"><use href="#rot"/></svg></button>
    <button class="m" aria-label="缩放"><svg class="ico"><use href="#boxc"/></svg></button><button class="m" aria-label="投影"><svg class="ico"><use href="#prj"/></svg></button>
    <button class="m" aria-label="阵列"><svg class="ico"><use href="#g9"/></svg></button><button class="m" aria-label="对齐"><svg class="ico"><use href="#alg"/></svg></button>
    <button class="m" aria-label="变形"><svg class="ico"><use href="#cg1"/></svg></button><button class="m" aria-label="检查"><svg class="ico"><use href="#chk"/></svg></button>
    <button class="m" aria-label="图块"><svg class="ico"><use href="#sol"/></svg></button><button class="m" aria-label="实体"><svg class="ico"><use href="#pyr"/></svg></button>
  </aside>

  <section class="center">
    <div class="viewport">
      <svg class="scene" viewBox="51 176 1645 836" preserveAspectRatio="xMidYMid meet">
        <defs>
          <linearGradient id="sideV" gradientUnits="userSpaceOnUse" x1="0" y1="377" x2="0" y2="870"><stop offset="0" stop-color="#0070c8"/><stop offset=".42" stop-color="#0579d2"/><stop offset=".55" stop-color="#138ae8"/><stop offset=".7" stop-color="#0e86e4"/><stop offset="1" stop-color="#0078d2"/></linearGradient>
          <linearGradient id="legF" gradientUnits="userSpaceOnUse" x1="652" y1="0" x2="684" y2="0"><stop offset="0" stop-color="#2fa4ff" stop-opacity="0"/><stop offset=".45" stop-color="#2fa4ff"/><stop offset=".65" stop-color="#0d80dc"/><stop offset="1" stop-color="#004f90"/></linearGradient>
          <linearGradient id="legFade" gradientUnits="userSpaceOnUse" x1="0" y1="600" x2="0" y2="700"><stop offset="0" stop-color="#000"/><stop offset="1" stop-color="#fff"/></linearGradient>
          <mask id="legMask" maskUnits="userSpaceOnUse" x="640" y="590" width="60" height="300"><path fill="url(#legFade)" stroke="none" d="M640 590h60v300h-60z"/></mask>
          <linearGradient id="backV" gradientUnits="userSpaceOnUse" x1="0" y1="400" x2="0" y2="870"><stop offset="0" stop-color="#0078d4"/><stop offset=".2" stop-color="#0a80dc"/><stop offset=".45" stop-color="#2fa4ff"/><stop offset=".5" stop-color="#2fa4ff"/><stop offset=".8" stop-color="#0078d4"/><stop offset="1" stop-color="#0078d4"/></linearGradient>
          <linearGradient id="backH" gradientUnits="userSpaceOnUse" x1="768" y1="0" x2="1009" y2="0"><stop offset="0" stop-color="#003a70" stop-opacity=".8"/><stop offset=".06" stop-color="#005aa8" stop-opacity=".3"/><stop offset=".14" stop-color="#005aa8" stop-opacity="0"/><stop offset=".8" stop-color="#005aa8" stop-opacity="0"/><stop offset=".94" stop-color="#0060b0" stop-opacity=".6"/><stop offset="1" stop-color="#003a70" stop-opacity=".9"/></linearGradient>
          <linearGradient id="slab" x1="0" y1="0" x2="0" y2="1"><stop offset="0" stop-color="#004c8c"/><stop offset=".5" stop-color="#0078d0"/><stop offset="1" stop-color="#003c74"/></linearGradient>
          <linearGradient id="col" x1="0" y1="0" x2="1" y2="0"><stop offset="0" stop-color="#00385e"/><stop offset=".4" stop-color="#0078d4"/><stop offset=".7" stop-color="#0070c8"/><stop offset="1" stop-color="#00345c"/></linearGradient>
          <linearGradient id="baseV" x1="0" y1="0" x2="0" y2="1"><stop offset="0" stop-color="#0082e0"/><stop offset=".4" stop-color="#007ad2"/><stop offset=".6" stop-color="#005494"/><stop offset=".75" stop-color="#005494"/><stop offset=".86" stop-color="#0078d0"/><stop offset="1" stop-color="#004c88"/></linearGradient>
          <radialGradient id="shine"><stop offset="0" stop-color="#38aaff"/><stop offset="1" stop-color="#38aaff" stop-opacity="0"/></radialGradient>
          <g id="chair">
            <path fill="url(#sideV)" stroke="none" d="M460 390C461 381 464 377 468 377S475 381 476 390L474 505C474 535 478 548 484 556C492 572 518 584 542 583C590 582 625 575 658 573C674 574 684 585 684 598L682 870H663L658 681C657 645 652 632 634 632H515C502 632 498 640 497 655L493 681L472 870H445L453 783L461 722C465 680 463 650 461 611L458 563C455 500 457 440 460 390z"/>
            <path fill="url(#legF)" stroke="none" mask="url(#legMask)" d="M652 600H683L682 870H663L658 681z"/>
            <path stroke="#004a88" stroke-width="3" opacity=".5" d="M461 392C458 450 457 520 460 575L464 664C464 700 461 722 459 740L447 868M666 574C676 577 682 586 682 598V620"/>
            <path stroke="#0064ac" d="M460 390C461 381 464 377 468 377S475 381 476 390"/>
            <g class="edge">
              <path d="M460 389C456 450 455 520 459 575L463 664C463 700 460 722 458 740L445 868 447 871H471L483 757 493 681 497 655C498 639 503 632 515 632H634C652 632 657 645 658 681L663 868 665 871H680L682 868 683 647V611"/>
              <path d="M473 868L486 757 496 681 500 657C501 642 507 635 516 635H632C649 635 653 645 655 660L661 760 664 867H682M446 867H472"/>
              <path d="M476 390L474 505C474 535 478 548 484 556M460 391L465 400 467 512C467 545 474 559 480 568C491 588 520 596 550 600S640 598 684 604M461 611H684M465 397L469 391 475 397"/>
            </g>
          </g>
          <path id="back" d="M794 394C797 383 804 378 816 378C850 374 870 389 889 389S928 374 961 378C973 378 980 383 984 394L996 482 1003 549 1008 603 1010 664C1010 715 1008 760 1008 800V870H986L982 698 979 655C978 640 973 632 961 632H816C804 632 800 640 799 655L795 698 791 870H770V800C768 760 768 715 768 664L769 603 775 549 782 482z"/>
        </defs>
        <path fill="#00528e" stroke="none" d="M677 462C720 464 755 468 782 482H995C1025 468 1057 464 1100 462z"/>
        <rect x="646" y="443" width="485" height="19" rx="9.500" fill="url(#slab)" stroke="none"/>
        <path class="blue" d="M1115 443H656C643 443 643 462 656 462H1115M677 462C720 465 755 468 782 482"/>
        <path fill="url(#col)" stroke="none" d="M877 630h24v152h-24z"/>
        <path class="blue" d="M889 632v146"/>
        <path fill="url(#baseV)" stroke="none" d="M870 783V779H908V783C908 815 910 822 920 829C932 836 965 840 984 845C1005 851 1017 852 1023 870H754C759 855 768 852 793 844C830 835 850 835 858 828C868 820 870 805 870 783z"/>
        <ellipse cx="865" cy="857" rx="55" ry="5" fill="url(#shine)" stroke="none"/>
        <ellipse cx="882" cy="825" rx="12" ry="6" fill="url(#shine)" stroke="none"/>
        <path class="blue" d="M869 783V779H908V783H869C870 805 868 820 858 828C850 835 830 835 793 844M768 853C761 857 757 861 754 870H1023"/>
        <use href="#back" fill="url(#backV)" stroke="none"/>
        <use href="#back" fill="url(#backH)" stroke="none"/>
        <path stroke="#0064ac" d="M794 394C797 383 804 378 816 378C850 374 870 389 889 389S928 374 961 378C973 378 980 383 984 394"/>
        <g class="edge">
          <path d="M794 397L782 482 775 549 769 603 768 664C767 715 770 760 770 800V868L772 871H790L792 868 796 698 800 655C801 639 806 632 817 632H960C971 632 977 639 978 655L982 698 986 868 988 871H1006L1008 868V800C1008 760 1010 715 1010 664L1008 603 1003 549 996 482 984 397"/>
          <path d="M794 868L798 698 802 657C803 643 808 635 818 635H959C969 635 974 643 975 657L979 698 984 868M770 867H793M985 867H1008"/>
          <path d="M794 397C804 391 808 388 818 389C848 389 862 404 889 404S928 389 959 389C970 389 974 391 984 397M889 389V634M769 611H1008M794 390V397M984 390V397"/>
        </g>
        <use href="#chair"/>
        <use href="#chair" transform="translate(1778 0) scale(-1 1)"/>
        <path stroke="#75797e" stroke-width="2" d="M86 949V978H114"/>
        <text class="ax" x="88" y="951">z</text><text class="ax" x="116" y="977">y</text>
      </svg>
      <button class="vname">Right <i></i></button>
    </div>
    <nav class="vtabs"><button>Perspective</button><button>Top</button><button>Front</button><button class="on">Right</button><button class="on plus" aria-label="新增"><svg viewBox="0 0 10 10"><path d="M3.500 3.500v-3h3v3h3v3h-3v3h-3v-3h-3v-3z" stroke="#777"/></svg></button></nav>
  </section>

  <aside class="panel">
    <nav class="ptabs"><button><svg class="ico"><use href="#wheel"/></svg>属</button><button><svg class="ico"><use href="#layers"/></svg>图</button><button><svg class="ico"><use href="#bomb"/></svg>渲</button><button><svg class="ico"><use href="#pen"/></svg>材</button><button><svg class="ico"><use href="#open"/></svg>材</button><button><svg class="ico"><use href="#note"/></svg>说</button><button class="on"><svg class="ico"><use href="#mon"/></svg>显</button><svg class="ico pgear"><use href="#cog"/></svg></nav>
    <div class="props">
      <div class="row top"><span>使用中的工作视窗</span><div class="mono">Right</div></div>
      <div class="row top"><label for="mode">显示模式</label><div><select id="mode"><option>着色模式</option></select></div></div>
      <h2>常规设定</h2>
      <div class="row"><label for="bg">背景</label><div><select id="bg"><option>使用程序设置</option></select></div></div>
      <div class="row"><label for="c1">平坦着色</label><div><input type="checkbox" id="c1"></div></div>
      <div class="row"><label for="c2">着色顶点颜色</label><div><input type="checkbox" id="c2"></div></div>
      <div class="row"><label for="c3">阴影</label><div><input type="checkbox" id="c3"></div></div>
      <div class="row"><label for="c4">曲面结构线</label><div><input type="checkbox" id="c4"></div></div>
      <div class="row"><label for="c5">曲面边缘</label><div><input type="checkbox" id="c5" checked></div></div>
      <div class="row"><label for="c6">正切边缘</label><div><input type="checkbox" id="c6" checked></div></div>
      <div class="row"><label for="c7">正切接缝</label><div><input type="checkbox" id="c7" checked></div></div>
      <div class="row"><label for="c8">网格框线</label><div><input type="checkbox" id="c8"></div></div>
      <div class="row"><label for="c9">曲线</label><div><input type="checkbox" id="c9" checked></div></div>
      <div class="row"><label for="c10">灯光</label><div><input type="checkbox" id="c10" checked></div></div>
      <div class="row"><label for="c11">截平面</label><div><input type="checkbox" id="c11" checked></div></div>
      <div class="row"><label for="c12">文字</label><div><input type="checkbox" id="c12" checked></div></div>
      <div class="row"><label for="c13">注解</label><div><input type="checkbox" id="c13" checked></div></div>
      <div class="row"><label for="c14">点物件</label><div><input type="checkbox" id="c14" checked></div></div>
      <div class="row"><label for="c15">点云</label><div><input type="checkbox" id="c15" checked></div></div>
      <div class="row"><label for="tr">透明度</label><div><input type="text" id="tr" class="num" value="0"><svg class="spin" viewBox="0 0 16 14"><path fill="#ddd" stroke="#bbb" d="M1 0h14v14H1zM1 7h14"/><path fill="#111" stroke="none" d="M8 1l3 4H5zM8 13l3-4H5z"/></svg></div></div>
      <h2>格线 &amp; 格线轴设定</h2>
      <div class="row"><label for="c16">格线</label><div><input type="checkbox" id="c16"></div></div>
      <div class="row"><label for="c17">工作平面轴线</label><div><input type="checkbox" id="c17"></div></div>
      <div class="row"><label for="c18">Z 轴</label><div><input type="checkbox" id="c18"></div></div>
      <div class="row"><label for="c19">世界座标轴图标</label><div><input type="checkbox" id="c19" checked></div></div>
      <h2>物件设定</h2>
      <div class="row"><label for="c20">背面着色</label><div><input type="checkbox" id="c20" checked></div></div>
      <div class="row sub"><label for="clr">背面颜色</label><div><input type="color" id="clr" value="#ffff00"></div></div>
      <div class="row"><label for="c21">边框方块显示</label><div><input type="checkbox" id="c21"></div></div>
      <h2>截平面设置</h2>
      <div class="row"><label for="c22">封闭缺口</label><div><input type="checkbox" id="c22" checked></div></div>
      <div class="row"><label for="c23">显示边缘</label><div><input type="checkbox" id="c23" checked></div></div>
      <button class="edit">编辑"着色模式"设定...</button>
    </div>
    <div class="mark"><div><b>学犀牛</b><span>xuexiniu.com</span></div><em>中文网</em></div>
  </aside>
</main>

<section class="osnap">
  <label><input type="checkbox" checked>端点</label><label><input type="checkbox">最近点</label><label><input type="checkbox">点</label><label><input type="checkbox" checked>中点</label><label><input type="checkbox" checked>中心点</label><label><input type="checkbox" checked>交点</label><label><input type="checkbox" checked>垂点</label><label><input type="checkbox">切点</label><label><input type="checkbox">四分点</label><label><input type="checkbox">节点</label><label><input type="checkbox">顶点</label><label class="wide"><input type="checkbox" disabled>投影</label><label><input type="checkbox" disabled>停用</label>
</section>
<footer class="status">
  <button class="s1">工作平面</button><span class="s2">x 45.017</span><span class="s2">y 14.077</span><span class="s2">z 0.000</span><span class="s2">厘米</span><button class="layer"><i></i>椅子</button><button>锁定格点</button><button class="act">正交</button><button>平面模式</button><button class="act">物件锁点</button><button class="act">智慧轨迹</button><button class="act">操作轴</button><button>记录建构历史</button><button>过滤器</button><span class="tol">绝对公差: 0.001</span>
</footer>
</body>
</html>
```

FILE: styles.css
```css
* { box-sizing: border-box; }

body {
  margin: 0;
  min-height: 100vh;
  display: flex;
  flex-direction: column;
  position: relative;
  background: #ebecf0;
  color: #111;
  font: 12px/17px "Open Sans", "Noto Sans CJK SC", sans-serif;
  overflow-x: hidden;
}

button, input, select { font: inherit; color: inherit; }
button { border: 0; background: none; padding: 0; margin: 0; white-space: nowrap; }
h1, h2, p { margin: 0; font-weight: 400; }
a { color: inherit; text-decoration: none; }
svg { fill: none; stroke: #222; flex: none; }
.sprite { position: absolute; width: 0; height: 0; }

/* icon fills */
.w { fill: #fff; }
.b { fill: url(#gb); stroke: #223a80; }
.bf { fill: var(--bulb, #aaa); stroke: #444; }
.lf { fill: var(--bulb, #999); }
.yel { --bulb: #ffe880; }
.yel2 use:first-child { --bulb: #ffe880; }
.cg { stroke: #a8a8a8; }
.ico { width: 18px; height: 18px; }
.dim use:first-child { opacity: .4; }

/* title and menu */
.titlebar {
  display: flex;
  align-items: center;
  height: 22px;
  padding-left: 1px;
  background: #fff;
}
.logo { width: 16px; height: 18px; }
h1 { margin-left: 4px; font-size: 12px; line-height: 22px; }
.winbtns { margin-left: auto; margin-right: 2px; display: flex; }
.winbtns button { width: 46px; height: 22px; }
.winbtns svg { width: 12px; height: 12px; vertical-align: middle; }
.topshade {
  position: absolute;
  top: 0;
  right: 326px;
  width: 279px;
  height: 2px;
  background: #ccc;
  box-shadow: 0 0 3px #aaa;
}
.menu {
  display: flex;
  gap: 11px;
  height: 20px;
  padding-left: 6px;
  background: #fff;
  line-height: 21px;
}
.upload {
  position: absolute;
  top: 27px;
  right: 104px;
  display: flex;
  width: 102px;
  height: 25px;
  border: 1px solid #5fb8f8;
  border-radius: 4px;
  overflow: hidden;
  background: linear-gradient(#e2f4ff, #bfe6ff);
  color: #4db4f8;
}
.cloud { width: 28px; background: #22a2ff; }
.cloud svg { width: 20px; height: 20px; margin-top: 2px; }
.uptext { flex: 1; line-height: 23px; }

/* command area */
.command {
  border-top: 2px solid #e4e6ec;
  border-left: 5px solid #e4e6ec;
  border-bottom: 6px solid #e6e8ee;
  background: #fff;
  font-family: "Liberation Mono", "Noto Sans CJK SC", monospace;
}
.history { display: flex; height: 23px; border-bottom: 1px solid #ccd8ea; }
.lines {
  flex: 1;
  display: flex;
  flex-direction: column;
  justify-content: flex-end;
  overflow: hidden;
  padding-left: 3px;
  line-height: 14px;
  white-space: pre;
}
.prompt { display: flex; height: 15px; padding-left: 3px; line-height: 14px; font-weight: 700; }
.prompt input { flex: 1; border: 0; padding: 0; outline: 0; }
.scroll { width: 17px; background: #f2f2f2; }
.scroll svg { width: 16px; display: block; }

/* tool bars */
.bars {
  display: grid;
  grid-template-columns: 1204fr 357fr 438fr;
  height: 57px;
  border-bottom: 1px solid #dfe1ea;
}
.bars.second { grid-template-columns: 1434fr 565fr; height: 31px; border-bottom-color: #e2e4ec; }
.bar { min-width: 0; margin-left: 3px; border-left: 2px solid #dfe1ea; }
.bar:first-child { margin-left: 4px; }
.icons { display: flex; flex-wrap: wrap; align-content: flex-start; }
.icons button { position: relative; width: 22px; height: 22px; line-height: 0; }
.icons .m::after {
  content: "";
  position: absolute;
  right: 0;
  bottom: 0;
  border: 2px solid transparent;
  border-right-color: #666;
  border-bottom-color: #666;
}
.second .icons { padding-top: 2px; }
.tabs { display: flex; height: 18px; border-bottom: 1px solid #ccd8e4; }
.tabs button {
  position: relative;
  padding: 0 8px 0 11px;
  font: 13px/17px "Liberation Mono", "Noto Sans CJK SC", monospace;
  background: #d8d8d8;
  clip-path: polygon(9px 0, calc(100% + 9px) 0, 100% 100%, 0 100%);
  box-shadow: 9px 0 #d8d8d8;
}
.tabs button + button::before {
  content: "";
  position: absolute;
  left: 4px;
  top: 0;
  bottom: 0;
  border-left: 1px solid #eef0f6;
  transform: skewX(-28deg);
}
.tabs .on { background: #eff1f5; box-shadow: none; }
.tabs button:nth-of-type(15) {
  box-shadow: none;
  padding-right: 10px;
  clip-path: polygon(9px 0, 100% 0, 100% 100%, 0 100%);
}
.gearopt { margin-left: auto; width: 14px; height: 14px; margin-right: 5px; }

/* working area */
.work { flex: 1; display: grid; grid-template-columns: 51px minmax(0, 1fr) 303px; }
.tools { padding: 5px 2px 0 1px; border-top: 2px solid #dfe1ea; }
.center { display: flex; flex-direction: column; }
.viewport {
  position: relative;
  flex: 1;
  min-height: 500px;
  background: #9da3ab;
  border: 1px solid #a4b4cc;
}
.scene { position: absolute; inset: 0; width: 100%; height: 100%; }
.edge path { stroke: #6d24cc; stroke-width: 2; fill: none; }
.blue { stroke: #0612f0; stroke-width: 2; fill: none; }
.ax { fill: #75797e; stroke: none; font: 13px "Liberation Sans", sans-serif; }
.vname {
  position: absolute;
  top: 0;
  left: 0;
  display: flex;
  align-items: center;
  gap: 5px;
  height: 14px;
  padding: 0 2px 0 5px;
  background: #8aa4c4;
  font: 700 12px/14px "Liberation Mono", monospace;
}
.vname i { border-left: 1px solid #222; height: 11px; display: flex; align-items: center; padding-left: 1px; }
.vname i::after { content: ""; border: 4px solid transparent; border-top-color: #111; border-bottom: 0; }

.vtabs { display: flex; height: 21px; padding-top: 2px; }
.vtabs button {
  height: 17px;
  padding: 0 4px 0 8px;
  font: 11px/17px "Liberation Mono", monospace;
  background: #d8d8d8;
  border-right: 1px solid #c6cede;
  clip-path: polygon(0 0, 100% 0, 100% 100%, 7px 100%, 0 8px);
}
.vtabs .on { background: #eff1f5; border-bottom: 1px solid #ccd4e2; }
.vtabs .plus { padding-right: 8px; }
.vtabs .plus svg { width: 10px; height: 10px; }

/* property panel */
.panel { position: relative; display: flex; flex-direction: column; padding: 7px 1px 4px 6px; }
.ptabs { display: flex; height: 20px; border-top: 1px solid #dfe1ea; }
.ptabs button {
  display: flex;
  align-items: center;
  gap: 3px;
  width: 39px;
  padding-left: 3px;
  background: #d8d8d8;
  border-radius: 6px 8px 0 0;
  border-right: 1px solid #eef0f6;
}
.ptabs .ico { width: 16px; height: 16px; }
.ptabs .on { background: #eff1f5; }
.ptabs .pgear { margin: 1px 0 0 7px; }
.props {
  flex: 1;
  display: flex;
  flex-direction: column;
  background: #fff;
  border: 1px solid #ccd4e4;
  padding: 0 1px 2px 1px;
}
.row { display: flex; height: 17px; border-bottom: 1px solid #e9e9ee; border-left: 18px solid #f5f5f8; line-height: 16px; }
.row > :first-child { width: 129px; padding-left: 3px; border-right: 1px solid #e9e9ee; }
.row.top { border-left: 0; }
.row.top > :first-child { width: 147px; padding-left: 3px; }
.row.sub > :first-child { padding-left: 22px; border-right: 0; }
.row > div { flex: 1; display: flex; align-items: center; padding-left: 2px; min-width: 0; }
.row.sub > div { padding: 0; }
.mono { font: 11px/16px "Liberation Mono", monospace; }
h2 {
  height: 22px;
  padding-left: 3px;
  border-bottom: 1px solid #e9e9ee;
  background: #f5f5f8;
  color: #444;
  font: 14px/20px "Liberation Mono", "Noto Sans CJK SC", monospace;
}
select {
  appearance: none;
  flex: 1;
  height: 16px;
  border: 0;
  padding: 0;
  line-height: 16px;
  background:
    linear-gradient(45deg, transparent 42%, #666 42%, #666 60%, transparent 60%) calc(100% - 8px) 6px / 5px 5px no-repeat,
    linear-gradient(-45deg, transparent 42%, #666 42%, #666 60%, transparent 60%) calc(100% - 4px) 6px / 5px 5px no-repeat,
    linear-gradient(#dedede, #dedede) 100% 0 / 16px 16px no-repeat;
}
.num { flex: 1; min-width: 0; border: 0; padding: 0; color: #555; font: 12px/15px "Open Sans", sans-serif; }
.spin { width: 16px; height: 14px; margin-right: 1px; }
input[type="checkbox"] {
  appearance: none;
  display: inline-grid;
  place-content: center;
  flex: none;
  width: 13px;
  height: 13px;
  margin: 0;
  border: 1px solid #444;
  background: #fff;
}
input[type="checkbox"]:checked::after {
  content: "";
  width: 8px;
  height: 4px;
  margin-bottom: 2px;
  border: solid #333;
  border-width: 0 0 1px 1px;
  transform: rotate(-45deg);
}
input[type="checkbox"]:disabled { border-color: #bbb; background: #e0e0e0; }
input[type="color"] {
  appearance: none;
  flex: 1;
  height: 16px;
  padding: 0;
  border: 2px solid #c4c4c4;
  background: none;
}
input[type="color"]::-webkit-color-swatch-wrapper { padding: 0; }
input[type="color"]::-webkit-color-swatch { border: 0; }
.edit { margin-top: auto; height: 19px; border: 2px solid #0b7bdc; background: #e0e0e0; line-height: 15px; }
.mark {
  position: absolute;
  right: 34px;
  bottom: -19px;
  display: flex;
  align-items: center;
  gap: 3px;
  height: 41px;
  padding: 3px 5px 0 6px;
  border-radius: 4px;
  background: #ebebed99;
  box-shadow: 1px 1px 2px #ccc;
}
.mark div { display: flex; flex-direction: column; }
.mark b { font: 900 20px/20px "Noto Sans CJK SC", sans-serif; }
.mark span { font: 600 10px/12px "Open Sans", sans-serif; }
.mark em {
  width: 19px;
  height: 31px;
  background: #d0384c;
  color: #fff;
  font: 700 9px/10px "Noto Sans CJK SC", sans-serif;
  writing-mode: vertical-rl;
  text-align: center;
  padding: 0 5px 0 4px;
}

/* object snaps and status */
.osnap {
  display: flex;
  align-items: flex-start;
  gap: 7px;
  height: 34px;
  margin-left: 3px;
  padding: 4px 0 0 4px;
  border-left: 2px solid #dfe1ea;
}
.osnap label { display: flex; align-items: center; gap: 3px; height: 17px; }
.osnap .wide { margin-right: 13px; }
.status {
  display: flex;
  height: 18px;
  border-top: 1px solid #c9d3e4;
  line-height: 18px;
}
.status > * { padding: 0 5px; border-right: 1px solid #ccd4e4; text-align: center; }
.status .s1 { width: 58px; }
.status .s2 { width: 84px; }
.status .layer { width: 165px; display: flex; align-items: center; gap: 2px; padding-left: 4px; }
.layer i { width: 11px; height: 11px; background: #7a22cc; border: 1px solid #222; }
.status .act { background: #e0f1fc; font-weight: 700; }
.status .tol { flex: 1; text-align: left; padding-left: 2px; margin-right: 6px; }
```
